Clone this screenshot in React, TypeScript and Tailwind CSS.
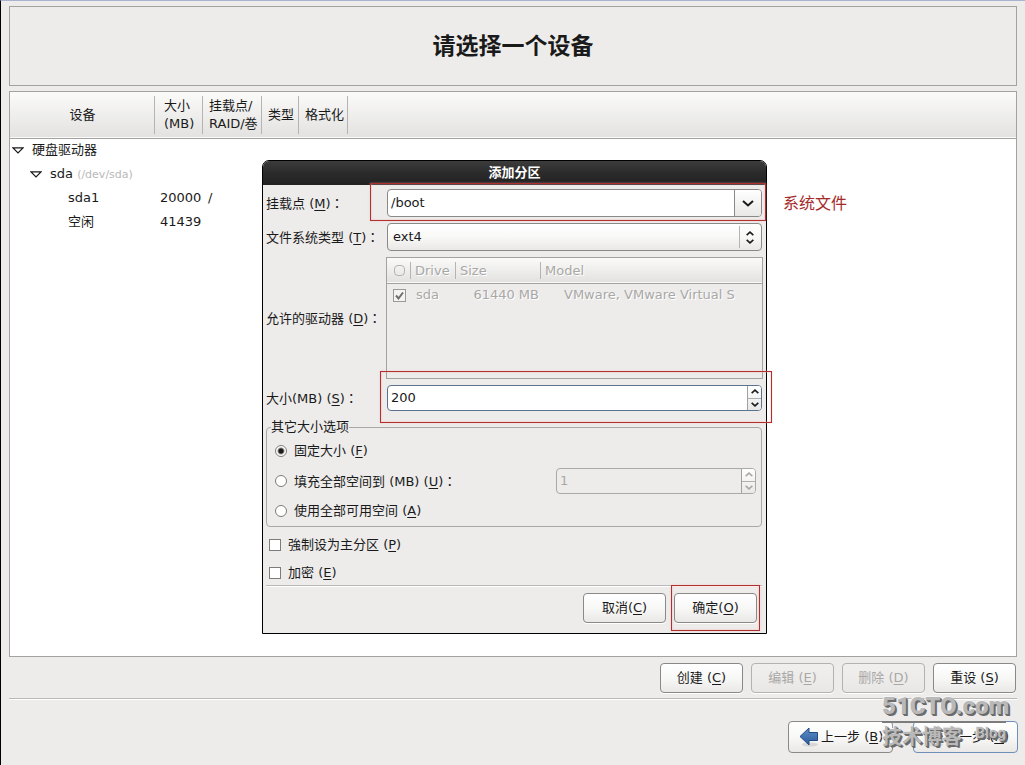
import type { ReactNode } from "react";

function Key({ children }: { children: string }) {
  return (
    <>
      (<span className="underline underline-offset-2">{children}</span>)
    </>
  );
}

function Colon() {
  return <span className="font-['Noto_Sans_CJK_TC',sans-serif]" lang="zh-TW">：</span>;
}

function Chevron({ up = false, large = false }: { up?: boolean; large?: boolean }) {
  return (
    <svg
      viewBox="0 0 12 7"
      className={large ? "h-[7px] w-3" : "h-[5px] w-2"}
      fill="none"
      stroke="currentColor"
      strokeWidth={large ? 2 : 2.4}
      aria-hidden="true"
    >
      <path d={up ? "M1 6 L6 1.5 L11 6" : "M1 1 L6 5.5 L11 1"} />
    </svg>
  );
}

function Expander() {
  return (
    <svg viewBox="0 0 12 7" className="h-[7px] w-3 shrink-0" fill="#fff" stroke="#1a1a1a" strokeWidth="1.2" aria-hidden="true">
      <path d="M1 0.8 H11 L6 6 Z" />
    </svg>
  );
}

function Arrow({ right = false }: { right?: boolean }) {
  return (
    <svg viewBox="0 0 20 20" className="size-5 shrink-0" aria-hidden="true">
      <defs>
        <linearGradient id={right ? "arrow-next" : "arrow-back"} x1="0" y1="0" x2="0" y2="1">
          <stop offset="0" stopColor="#5c8fc9" />
          <stop offset="1" stopColor="#2c5a98" />
        </linearGradient>
      </defs>
      <ellipse cx="11" cy="17.5" rx="8" ry="2" fill="#000" opacity="0.1" />
      <path
        d={right ? "M19 9.5 L10 1 V5.5 H1.5 V13.5 H10 V18 Z" : "M1 9.5 L10 1 V5.5 H18.5 V13.5 H10 V18 Z"}
        fill={right ? "url(#arrow-next)" : "url(#arrow-back)"}
        stroke="#204a87"
        strokeWidth="1"
      />
    </svg>
  );
}

function Button({ children, disabled = false }: { children: ReactNode; disabled?: boolean }) {
  return (
    <button
      type="button"
      disabled={disabled}
      className="h-[30px] w-[83px] rounded-[4px] border border-[#8a8987] bg-linear-to-b from-white via-[#f8f8f7] to-[#e9e8e7] shadow-[0_1px_0_#fff] disabled:border-[#b3b2b0] disabled:from-[#f0efee] disabled:via-[#edeceb] disabled:to-[#e8e7e6] disabled:text-[#a9a8a6]"
    >
      {children}
    </button>
  );
}

function Spinner({ id, value, disabled = false }: { id: string; value: string; disabled?: boolean }) {
  return (
    <div
      className={
        disabled
          ? "flex h-[26px] w-full overflow-hidden rounded-[4px] border border-[#aaa9a7] text-[#a9a8a6]"
          : "flex h-[26px] w-full overflow-hidden rounded-[4px] border border-[#5c7390] bg-white"
      }
    >
      <input id={id} defaultValue={value} disabled={disabled} className="min-w-0 flex-1 px-[3px] outline-none" />
      <div className="flex w-3.5 flex-col divide-y divide-[#b0afad] border-l border-[#a0a09e] bg-linear-to-b from-white to-[#e9e8e7]">
        <button type="button" aria-label="增加" disabled={disabled} className="flex flex-1 items-center justify-center">
          <Chevron up />
        </button>
        <button type="button" aria-label="减少" disabled={disabled} className="flex flex-1 items-center justify-center">
          <Chevron />
        </button>
      </div>
    </div>
  );
}

function Radio({ id, checked = false, children }: { id: string; checked?: boolean; children: ReactNode }) {
  return (
    <div className="flex items-center gap-[7px]">
      <input
        id={id}
        type="radio"
        name="extra-size"
        defaultChecked={checked}
        className="size-3 appearance-none rounded-full border border-[#7d7c7a] bg-white checked:bg-[radial-gradient(circle,#1a1a1a_2px,#fff_4px)]"
      />
      <label htmlFor={id}>{children}</label>
    </div>
  );
}

function Check({ id, children }: { id: string; children: ReactNode }) {
  return (
    <div className="flex h-6 items-center gap-[7px] pl-[3px]">
      <input id={id} type="checkbox" className="size-3 appearance-none border border-[#7d7c7a] bg-white checked:bg-[#444]" />
      <label htmlFor={id}>{children}</label>
    </div>
  );
}

function Mark({ className }: { className: string }) {
  return <span aria-hidden="true" className={`pointer-events-none absolute border border-[#b03030] shadow-[0_0_2px_#f5b0ac80,inset_0_0_2px_#f5b0ac] ${className}`} />;
}

const headings = [
  { text: ["设备"], cell: "w-[145px] text-center" },
  { text: ["大小", "(MB)"], cell: "w-12 pl-[9px] text-left" },
  { text: ["挂载点/", "RAID/巻"], cell: "w-[59px] pl-1.5 text-left" },
  { text: ["类型"], cell: "w-[37px] pl-1.5 text-left" },
  { text: ["格式化"], cell: "w-[49px] pl-1.5 text-left" },
];

function DeviceTable() {
  return (
    <table className="w-full table-fixed border-collapse">
      <thead>
        <tr className="h-[46px] border-b border-[#a3a2a0] bg-linear-to-b from-[#fbfbfa] to-[#e3e2e0]">
          {headings.map((h) => (
            <th key={h.text[0]} className={`relative py-0 pr-0 font-normal leading-[18px] whitespace-nowrap ${h.cell}`}>
              {h.text.map((line) => (
                <div key={line}>{line}</div>
              ))}
              <span className="absolute inset-y-1 right-0 border-r border-[#b5b4b2]" />
            </th>
          ))}
          <th className="p-0" />
        </tr>
      </thead>
      <tbody>
        <tr className="h-6">
          <td className="p-0 pl-0.5">
            <div className="flex items-center gap-2">
              <Expander />
              硬盘驱动器
            </div>
          </td>
        </tr>
        <tr className="h-6">
          <td className="p-0 pl-5">
            <div className="flex items-center gap-2 whitespace-nowrap">
              <Expander />
              <span>
                sda <span className="text-[11px] text-[#b8b8b8]">(/dev/sda)</span>
              </span>
            </div>
          </td>
        </tr>
        <tr className="h-6">
          <td className="p-0 pl-[58px]">sda1</td>
          <td className="p-0 pl-[5px]">20000</td>
          <td className="p-0 pl-[5px]">/</td>
        </tr>
        <tr className="h-6">
          <td className="p-0 pl-[58px]">空闲</td>
          <td className="p-0 pl-[5px]">41439</td>
        </tr>
      </tbody>
    </table>
  );
}

function DriveTable() {
  return (
    <div className="-ml-px -mr-px h-[122px] border border-[#a3a2a0] text-[#a9a8a6] [text-shadow:1px_1px_0_#fff]">
      <table className="w-full table-fixed border-collapse">
        <thead>
          <tr className="h-[25px] border-b border-[#a3a2a0] bg-linear-to-b from-[#fafaf9] to-[#e3e2e0]">
            <th className="relative w-6 p-0">
              <span className="mx-auto block size-[11px] rounded-[4px] border border-[#b5b4b2]" />
              <span className="absolute inset-y-1 right-0 border-r border-[#b5b4b2]" />
            </th>
            <th className="relative w-[45px] p-0 pt-0.5 pl-1 text-left font-normal">
              Drive
              <span className="absolute inset-y-1 right-0 border-r border-[#b5b4b2]" />
            </th>
            <th className="relative w-[85px] p-0 pt-0.5 pl-1 text-left font-normal">
              Size
              <span className="absolute inset-y-1 right-0 border-r border-[#b5b4b2]" />
            </th>
            <th className="p-0 pt-0.5 pl-1 text-left font-normal">Model</th>
          </tr>
        </thead>
        <tbody>
          <tr className="h-6">
            <td className="p-0">
              <div className="relative mx-auto size-[13px]">
                <input
                  type="checkbox"
                  aria-label="sda"
                  defaultChecked
                  disabled
                  className="block size-[13px] appearance-none border border-[#9a9997] bg-[#f4f3f2]"
                />
                <svg viewBox="0 0 13 13" className="pointer-events-none absolute inset-0" fill="none" stroke="#6e6d6b" strokeWidth="2" aria-hidden="true">
                  <path d="M3 6.5 L5.5 9.5 L10 3.5" />
                </svg>
              </div>
            </td>
            <td className="p-0 pl-[5px]">sda</td>
            <td className="p-0 pr-0.5 text-right">61440 MB</td>
            <td className="p-0 pl-[23px] whitespace-nowrap">VMware, VMware Virtual S</td>
          </tr>
        </tbody>
      </table>
    </div>
  );
}

function PartitionDialog() {
  return (
    <section
      role="dialog"
      aria-labelledby="dialog-title"
      className="absolute top-[68px] left-[calc(50%-251px)] w-[505px] rounded-t-[7px] border border-black bg-[#edeceb]"
    >
      <h2
        id="dialog-title"
        className="flex h-6 items-center justify-center rounded-t-[6px] bg-linear-to-b from-[#3c3c3c] via-[#2b2b2b] to-[#222] font-bold text-white"
      >
        添加分区
      </h2>
      <form className="flex flex-col pt-1 pr-1 pb-2.5 pl-[3px]">
        <div className="grid grid-cols-[121px_1fr] items-center gap-y-1.5">
          <label htmlFor="mount">
            挂载点 <Key>M</Key>
            <Colon />
          </label>
          <div className="relative">
            <div className="flex h-7 overflow-hidden rounded-[4px] border border-[#8a8987] bg-white">
              <input id="mount" defaultValue="/boot" className="min-w-0 flex-1 px-[3px] outline-none" />
              <button
                type="button"
                aria-label="展开"
                className="flex w-[27px] items-center justify-center border-l border-[#8a8987] bg-linear-to-b from-white to-[#e9e8e7]"
              >
                <Chevron large />
              </button>
            </div>
            <Mark className="-top-1.5 -right-1 -bottom-1 -left-[17px]" />
            <span className="absolute top-1.5 left-full ml-[21px] text-[16px] whitespace-nowrap text-[#a52a2a]">系统文件</span>
          </div>

          <label htmlFor="fstype">
            文件系统类型 <Key>T</Key>
            <Colon />
          </label>
          <div className="relative">
            <select
              id="fstype"
              defaultValue="ext4"
              className="block h-7 w-full appearance-none rounded-[4px] border border-[#8a8987] bg-linear-to-b from-white via-[#f8f8f7] to-[#e9e8e7] px-[5px] outline-none"
            >
              <option>ext4</option>
            </select>
            <span className="pointer-events-none absolute inset-y-[3px] right-2 flex flex-col justify-center gap-[3px] border-l border-[#b5b4b2] pl-1.5">
              <Chevron up />
              <Chevron />
            </span>
          </div>

          <span>
            允许的驱动器 <Key>D</Key>
            <Colon />
          </span>
          <DriveTable />

          <label htmlFor="size">
            大小(MB) <Key>S</Key>
            <Colon />
          </label>
          <div className="relative">
            <Spinner id="size" value="200" />
            <Mark className="-top-3.5 -right-2.5 -bottom-3 -left-[7px]" />
          </div>
        </div>

        <fieldset className="mt-2 rounded-[4px] border border-[#a9a8a6] pt-px pr-[5px] pl-2">
          <legend className="-ml-1 h-4 leading-4">其它大小选项</legend>
          <div className="flex h-[30px] items-center">
            <Radio id="fixed" checked>
              固定大小 <Key>F</Key>
            </Radio>
          </div>
          <div className="flex h-[30px] items-center justify-between">
            <Radio id="fill">
              填充全部空间到 (MB) <Key>U</Key>
              <Colon />
            </Radio>
            <div className="w-[200px]">
              <Spinner id="fill-size" value="1" disabled />
            </div>
          </div>
          <div className="flex h-[30px] items-center">
            <Radio id="all">
              使用全部可用空间 <Key>A</Key>
            </Radio>
          </div>
        </fieldset>

        <div className="mt-1.5 flex flex-col gap-1">
          <Check id="primary">
            強制设为主分区 <Key>P</Key>
          </Check>
          <Check id="encrypt">
            加密 <Key>E</Key>
          </Check>
        </div>

        <div className="flex justify-end gap-2 border-t border-[#b9b8b6] pt-[7px] pr-[5px] shadow-[inset_0_1px_0_#fff]">
          <Button>
            取消<Key>C</Key>
          </Button>
          <div className="relative">
            <Button>
              确定<Key>O</Key>
            </Button>
            <Mark className="-top-2 -right-[3px] -bottom-2 -left-[3px]" />
          </div>
        </div>
      </form>
    </section>
  );
}

function Watermark() {
  return (
    <div
      aria-hidden="true"
      className="pointer-events-none absolute -top-[30px] right-3 w-[124px] font-bold text-[#b9b9b9] [text-shadow:1px_1px_0_#6b6b6b,2px_2px_0_#6b6b6b,-1px_-1px_0_#f4f4f4]"
    >
      <div className="border-b-2 border-[#7c7c7c] font-[Roboto,sans-serif] text-[24px] leading-[30px] font-black whitespace-nowrap">
        51CTO.com
      </div>
      <div className="flex items-start justify-between leading-[28px]">
        <span className="text-[20px]">技术博客</span>
        <span className="font-[Roboto,sans-serif] text-[15px] leading-[20px]">Blog</span>
      </div>
    </div>
  );
}

export default function App() {
  return (
    <div className="flex min-h-screen flex-col border-t border-l border-t-[#a9b3cf] border-l-black bg-[#edeceb] px-2 pt-[5px] pb-3 font-['DejaVu_Sans','Noto_Sans_CJK_SC',sans-serif] text-[13px] leading-[18px] text-[#1a1a1a]">
      <header className="flex h-20 items-center justify-center border border-[#a3a2a0]">
        <h1 className="text-[23px] leading-8 font-bold">请选择一个设备</h1>
      </header>

      <main className="relative mt-[5px] flex-1 border border-[#a3a2a0] bg-white">
        <DeviceTable />
        <PartitionDialog />
      </main>

      <div className="mt-1.5 flex justify-end gap-2 pr-px">
        <Button>
          创建 <Key>C</Key>
        </Button>
        <Button disabled>
          编辑 <Key>E</Key>
        </Button>
        <Button disabled>
          删除 <Key>D</Key>
        </Button>
        <Button>
          重设 <Key>S</Key>
        </Button>
      </div>

      <hr className="mt-[5px] h-0.5 border-t border-[#b9b8b6] bg-white" />

      <footer className="relative -mr-px mt-[21px] flex justify-end gap-5">
        <button
          type="button"
          className="flex h-8 w-[105px] items-center gap-0.5 rounded-[4px] border border-[#8a8987] bg-linear-to-b from-white via-[#f8f8f7] to-[#e9e8e7] pl-2.5 whitespace-nowrap"
        >
          <Arrow />
          <span>
            上一步 <Key>B</Key>
          </span>
        </button>
        <button
          type="button"
          className="flex h-8 w-[105px] items-center gap-0.5 rounded-[4px] border border-[#6f8fb8] bg-linear-to-b from-white via-[#f8f8f7] to-[#e9e8e7] pl-2.5 whitespace-nowrap"
        >
          <Arrow right />
          <span>
            下一步 <Key>N</Key>
          </span>
        </button>
        <Watermark />
      </footer>
    </div>
  );
}
